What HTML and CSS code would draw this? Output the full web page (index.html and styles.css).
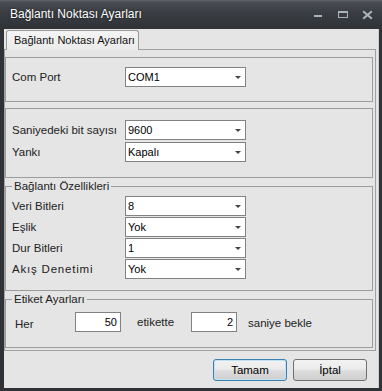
FILE: index.html
```html
<!DOCTYPE html>
<html lang="tr">
<head>
  <meta charset="UTF-8">
  <title>Bağlantı Noktası Ayarları</title>
  <link rel="stylesheet" href="styles.css">
</head>
<body>

<div class="window">
  <div class="titlebar">
    <span class="title">Bağlantı Noktası Ayarları</span>
    <svg class="controls" width="70" height="29" viewBox="0 0 70 29">
      <rect x="4" y="15" width="8" height="2" fill="#a9b3bc"/>
      <rect x="28" y="11" width="10" height="2" fill="#a9b3bc"/>
      <rect x="28.5" y="11.5" width="9" height="6" fill="none" stroke="#a9b3bc"/>
      <path d="M54 12 L61 18 M61 12 L54 18" stroke="#a9b3bc" stroke-width="2.2" stroke-linecap="square"/>
    </svg>
  </div>

  <div class="client">
    <div class="tabs">
      <div class="tab">Bağlantı Noktası Ayarları</div>
    </div>

    <div class="panel">
      <fieldset class="group g1">
        <div class="row">
          <span class="label">Com Port</span>
          <div class="combo">COM1</div>
        </div>
      </fieldset>

      <fieldset class="group g2">
        <div class="row">
          <span class="label">Saniyedeki bit sayısı</span>
          <div class="combo">9600</div>
        </div>
        <div class="row">
          <span class="label">Yankı</span>
          <div class="combo">Kapalı</div>
        </div>
      </fieldset>

      <fieldset class="group g3">
        <legend>Bağlantı Özellikleri</legend>
        <div class="row">
          <span class="label">Veri Bitleri</span>
          <div class="combo">8</div>
        </div>
        <div class="row">
          <span class="label">Eşlik</span>
          <div class="combo">Yok</div>
        </div>
        <div class="row">
          <span class="label">Dur Bitleri</span>
          <div class="combo">1</div>
        </div>
        <div class="row">
          <span class="label wide">Akış Denetimi</span>
          <div class="combo">Yok</div>
        </div>
      </fieldset>

      <fieldset class="group g4">
        <legend>Etiket Ayarları</legend>
        <div class="label-row">
          <span class="her">Her</span>
          <div class="textbox">50</div>
          <span class="mid">etikette</span>
          <div class="textbox">2</div>
          <span class="tail">saniye bekle</span>
        </div>
      </fieldset>
    </div>

    <div class="buttons">
      <button class="btn primary">Tamam</button>
      <button class="btn">İptal</button>
    </div>
  </div>
</div>

</body>
</html>
```

FILE: styles.css
```css
/* Genel */
body {
  margin: 0;
  background-color: #2c2f34;
  font-family: 'Liberation Sans', Arial, sans-serif;
}

.window {
  width: 382px;
  height: 391px;
  display: flex;
  flex-direction: column;
  background-color: #2f3237;
}

/* Başlık çubuğu */
.titlebar {
  height: 29px;
  display: flex;
  align-items: center;
  background: linear-gradient(#62656b 0, #4a4d53 2px, #3a3d42 12px, #2f3237 100%);
}

.title {
  flex: 1;
  padding-left: 10px;
  padding-bottom: 1px;
  font-size: 12px;
  color: #fff;
  text-shadow: 0 0 2px rgba(0, 0, 0, 0.6);
}

.controls {
  margin-right: 2px;
}

/* İçerik alanı */
.client {
  flex: 1;
  margin: 0 3px 3px 4px;
  background-color: #e5e5e5;
  border-right: 1px solid #cfcfcf;
  display: flex;
  flex-direction: column;
}

.tabs {
  height: 20px;
  padding: 1px 0 0 2px;
  display: flex;
}

.tab {
  position: relative;
  z-index: 1;
  box-sizing: border-box;
  width: 133px;
  height: 20px;
  padding: 3px 0 0 7px;
  border: 1px solid #9a9a9a;
  border-bottom: none;
  border-radius: 3px 3px 0 0;
  background: linear-gradient(#f4f4f4, #ebebeb);
  font-size: 11px;
  white-space: nowrap;
  color: #111;
}

.panel {
  margin: -1px 2px 0 0;
  padding: 7px 2px 2px 0;
  border: 1px solid #a0a0a0;
}

/* Grup kutuları */
.group {
  margin: 0;
  min-width: 0;
  border: 1px solid #9c9c9c;
  padding: 9px 6px 14px 6px;
  display: flex;
  flex-direction: column;
}

.group legend {
  padding: 0 2px;
  font-size: 11.5px;
  line-height: 13px;
  color: #222;
}

.g2 {
  margin-top: 6px;
  padding-top: 11px;
  padding-bottom: 15px;
  gap: 2px;
}

.g3 {
  margin-top: 2px;
  padding-top: 3px;
  padding-bottom: 11px;
  gap: 1px;
}

.g4 {
  margin-top: 2px;
  padding-top: 6px;
  padding-bottom: 15px;
}

.row {
  display: flex;
  align-items: center;
  height: 20px;
}

.label {
  width: 113px;
  font-size: 11.5px;
  color: #222;
}

.label.wide {
  letter-spacing: 0.8px;
}

/* Açılır kutu */
.combo {
  box-sizing: border-box;
  width: 121px;
  height: 20px;
  padding: 3px 0 0 2px;
  border: 1px solid #828282;
  background-color: #fff;
  font-size: 11px;
  color: #000;
  display: flex;
  justify-content: space-between;
}

.combo::after {
  content: "";
  align-self: center;
  margin: 0 4px 3px 0;
  border-left: 3px solid transparent;
  border-right: 3px solid transparent;
  border-top: 3px solid #444;
}

/* Etiket satırı */
.label-row {
  display: flex;
  align-items: center;
  height: 20px;
  font-size: 11.5px;
  color: #222;
}

.her {
  width: 60px;
  padding-left: 3px;
  padding-top: 3px;
}

.textbox {
  box-sizing: border-box;
  width: 46px;
  height: 20px;
  padding: 3px 3px 0 0;
  border: 1px solid #828282;
  background-color: #fff;
  text-align: right;
  font-size: 11px;
  color: #000;
}

.mid {
  width: 54px;
  padding-left: 16px;
  padding-bottom: 1px;
}

.tail {
  padding-left: 11px;
  padding-top: 2px;
}

/* Butonlar */
.buttons {
  margin-top: 8px;
  padding-right: 11px;
  display: flex;
  justify-content: flex-end;
  gap: 6px;
}

.btn {
  width: 74px;
  height: 22px;
  border: 1px solid #707070;
  border-radius: 3px;
  background: linear-gradient(#f2f2f2 0%, #ebebeb 45%, #dcdcdc 55%, #cfcfcf 100%);
  font-family: 'Liberation Sans', Arial, sans-serif;
  font-size: 11.5px;
  color: #000;
  padding: 0;
}

.btn.primary {
  border-color: #3c7fb1;
  box-shadow: inset 0 0 0 1px #bfe2f7;
}
```
